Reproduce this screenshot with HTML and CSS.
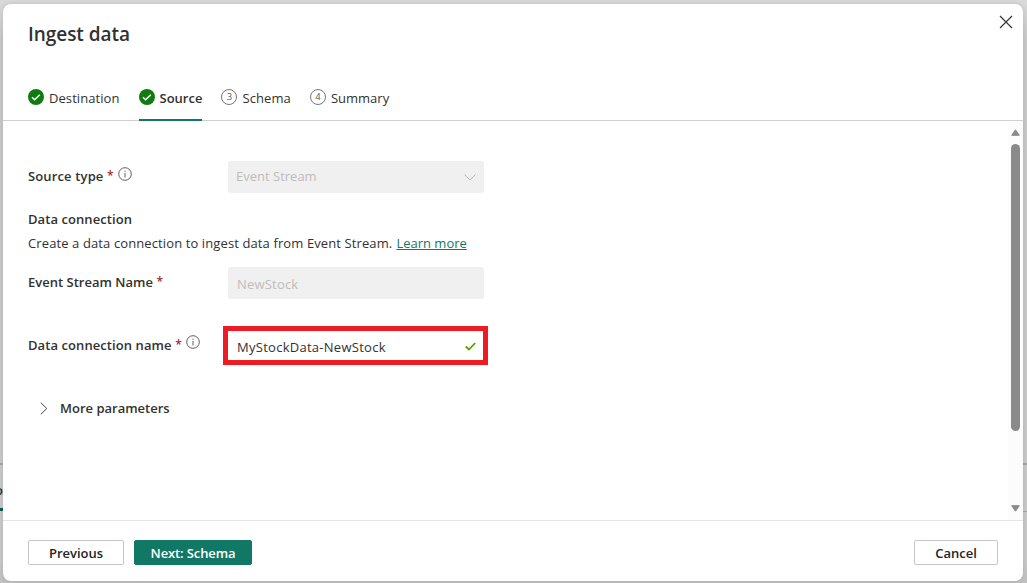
FILE: index.html
```html
<!DOCTYPE html>
<html lang="en">
<head>
<meta charset="utf-8">
<title>Ingest data</title>
<link rel="stylesheet" href="styles.css">
</head>
<body>
<div class="backdrop">
  <div class="page-line page-line-full"></div>
  <div class="page-line page-line-right"></div>
  <span class="page-tab">o</span>
  <div class="page-tab-bar"></div>
</div>
<main class="dialog">
  <header class="header">
    <div class="title-row">
      <h1 class="title">Ingest data</h1>
      <svg class="close" viewBox="0 0 14 14"><path d="M1 1l12 12M13 1L1 13" fill="none" stroke="#3b3a39" stroke-width="1.3"/></svg>
    </div>
    <nav class="tabs">
      <div class="tab"><svg class="step" viewBox="0 0 16 16"><circle cx="8" cy="8" r="8" fill="#107c10"/><path d="M4 8.2l2.6 2.5 5.2-5" fill="none" stroke="#fff" stroke-width="1.5"/></svg><span class="t-destination">Destination</span></div>
      <div class="tab tab-active"><svg class="step" viewBox="0 0 16 16"><circle cx="8" cy="8" r="8" fill="#107c10"/><path d="M4 8.2l2.6 2.5 5.2-5" fill="none" stroke="#fff" stroke-width="1.5"/></svg><span class="t-source">Source</span></div>
      <div class="tab"><span class="step step-number">3</span><span class="t-schema">Schema</span></div>
      <div class="tab"><span class="step step-number">4</span><span class="t-summary">Summary</span></div>
    </nav>
  </header>
  <div class="body">
    <section class="form">
      <div class="row row-type">
        <div class="label"><b class="l-type">Source type</b><i class="required">*</i><svg class="info" viewBox="0 0 14 14"><circle cx="7" cy="7" r="6.3" fill="none" stroke="#605e5c"/><path d="M7 6v4.5M7 3.6v1.2" stroke="#605e5c"/></svg></div>
        <div class="field disabled"><span class="f-type">Event Stream</span><svg class="chevron" viewBox="0 0 12 7"><path d="M.5 .5L6 6 11.500 .5" fill="none" stroke="#b8b6b4"/></svg></div>
      </div>
      <h2 class="section-title">Data connection</h2>
      <p class="hint"><span class="hint-text">Create a data connection to ingest data from Event Stream.</span><a class="link">Learn more</a></p>
      <div class="row row-stream">
        <div class="label"><b class="l-stream">Event Stream Name</b><i class="required">*</i></div>
        <div class="field field-text disabled"><span class="f-stream">NewStock</span></div>
      </div>
      <div class="row row-name">
        <div class="label"><b class="l-name">Data connection name</b><i class="required">*</i><svg class="info" viewBox="0 0 14 14"><circle cx="7" cy="7" r="6.3" fill="none" stroke="#605e5c"/><path d="M7 6v4.500M7 3.6v1.2" stroke="#605e5c"/></svg></div>
        <div class="field highlighted"><span class="f-name">MyStockData-NewStock</span><svg class="valid" viewBox="0 0 11 9"><path d="M.8 4.500l3.200 3L10.200 1" fill="none" stroke="#57a300" stroke-width="1.8"/></svg></div>
      </div>
      <div class="more"><svg class="expand" viewBox="0 0 8 13"><path d="M.8 .7L6.800 6.500 .8 12.300" fill="none" stroke="#484644"/></svg><b class="l-more">More parameters</b></div>
    </section>
    <div class="scrollbar">
      <svg class="arrow" viewBox="0 0 9 7"><path d="M4.500 .8L8.300 6.300H.7z" fill="#8a8a8a" stroke="#8a8a8a" stroke-linejoin="round"/></svg>
      <div class="thumb"></div>
      <svg class="arrow arrow-down" viewBox="0 0 9 7"><path d="M4.500 6.200L.7 .7h7.600z" fill="#8a8a8a" stroke="#8a8a8a" stroke-linejoin="round"/></svg>
    </div>
  </div>
  <footer class="footer">
    <button class="btn btn-previous"><span class="b-previous">Previous</span></button>
    <button class="btn btn-primary"><span class="b-next">Next: Schema</span></button>
    <button class="btn btn-cancel"><span class="b-cancel">Cancel</span></button>
  </footer>
</main>
</body>
</html>
```
FILE: styles.css
```css
* { box-sizing: border-box; }
body {
  margin: 0;
  width: 1027px;
  height: 583px;
  overflow: hidden;
  padding: 4px 4px 2px 3px;
  background: #cdcdcd;
  color: #323130;
  font: 13px/20px "Open Sans", "Noto Sans", sans-serif;
}
b { font-weight: 600; }
svg { display: block; flex: none; }
span, b, a { white-space: nowrap; }

/* page behind the dialog */
.backdrop { position: absolute; inset: 0; overflow: hidden; background: linear-gradient(#dadada, #c9c9c9 40px, #c9c9c9 560px, #c0c0c0); }
.page-line { position: absolute; height: 1px; background: #a5a5a5; }
.page-line-full { top: 463px; left: 0; width: 100%; height: 2px; }
.page-line-right { top: 511px; right: 0; width: 8px; }
.page-tab { position: absolute; left: -5px; top: 480px; font-weight: 600; color: #253040; }
.page-tab-bar { position: absolute; left: 0; top: 508px; width: 10px; height: 3px; background: #0b5f4f; }

.dialog {
  position: relative;
  display: flex;
  flex-direction: column;
  width: 1020px;
  height: 577px;
  overflow: hidden;
  border-radius: 8px;
  background: #fff;
  box-shadow: 0 0 5px rgba(0, 0, 0, .13);
}
.header { height: 117px; padding: 10px 10.5px 0 25px; border-bottom: 1px solid #d2d0ce; }
.title-row { display: flex; justify-content: space-between; height: 68px; }
.title { margin: 6px 0 0; height: 28px; font-size: 19px; line-height: 28px; font-weight: 600; letter-spacing: -.05px; }
.close { width: 14px; height: 14px; margin-top: 1px; }
.tabs { display: flex; gap: 19px; height: 39px; }
.tab { display: flex; gap: 5px; padding-top: 6px; height: 39px; }
.tab-active { font-weight: 600; border-bottom: 2px solid #117865; }
.step { width: 16px; height: 16px; margin-top: 1px; }
.step-number { border: 1px solid #797775; border-radius: 50%; font-size: 9.5px; line-height: 14px; text-align: center; color: #605e5c; }
.t-destination { letter-spacing: .07px; }
.t-schema { letter-spacing: .1px; }

.body { display: flex; justify-content: space-between; height: 399px; }
.form { padding: 40px 0 0 25px; }
.row { display: flex; height: 32px; }
.label { display: flex; width: 200px; padding-top: 5px; }
.l-type { letter-spacing: .14px; }
.l-name { letter-spacing: .08px; }
.l-stream { letter-spacing: .01px; }
.required { margin-left: 3.5px; width: 5px; font-size: 12px; font-style: normal; font-weight: 600; color: #a4262c; }
.info { width: 14px; height: 14px; margin: 1px 0 0 5.500px; }
.row-name .info { margin-top: 0; }
.field { display: flex; align-items: center; justify-content: space-between; width: 256px; height: 32px; padding: 0 8px; border-radius: 2px; }
.disabled { background: #f0f0f0; color: #bebcba; }
.field span { margin-top: -2px; }
.field-text { padding: 3px 9px 0; }
.f-stream { letter-spacing: .2px; }
.f-name { letter-spacing: .27px; }
.chevron { width: 12px; height: 7px; }
.section-title { margin: 16px 0 0; font-size: 13px; line-height: 20px; font-weight: 600; letter-spacing: .07px; }
.hint { display: flex; gap: 4px; margin: 4px 0 14px; }
.hint-text { letter-spacing: .11px; }
.link { color: #117865; text-decoration: underline; text-underline-offset: 1px; }
.row-name { height: 39px; margin-top: 27px; }
.row-name .label { width: 195px; padding-top: 9px; }
.highlighted { width: 265px; height: 39px; padding: 4px 7px 0 9px; border: 5px solid #ed1c24; border-radius: 0; }
.valid { width: 11px; height: 9px; margin-top: -2px; }
.more { display: flex; align-items: center; gap: 12px; margin-top: 33px; padding-left: 12px; }
.expand { width: 8px; height: 13px; }
.scrollbar { display: flex; flex-direction: column; align-items: center; width: 15px; padding: 8px 0; background: #fcfcfc; }
.arrow { width: 9px; height: 7px; }
.thumb { width: 9px; height: 287px; margin-top: 8px; border-radius: 5px; background: #8a8a8a; }
.arrow-down { margin-top: auto; }

.footer { display: flex; gap: 10px; height: 61px; padding: 19px 25px 0; border-top: 1px solid #e5e5e5; }
.btn { display: flex; align-items: center; justify-content: center; height: 25px; padding: 0; border: 1px solid #c8c6c4; border-radius: 2px; background: #fff; color: #242424; font: 600 13px/20px "Open Sans", "Noto Sans", sans-serif; }
.btn-previous { width: 96px; }
.btn-primary { width: 118px; border-color: #117865; background: #117865; color: #fff; }
.b-next { letter-spacing: -.12px; }
.btn-cancel { width: 84px; margin-left: auto; }
```
